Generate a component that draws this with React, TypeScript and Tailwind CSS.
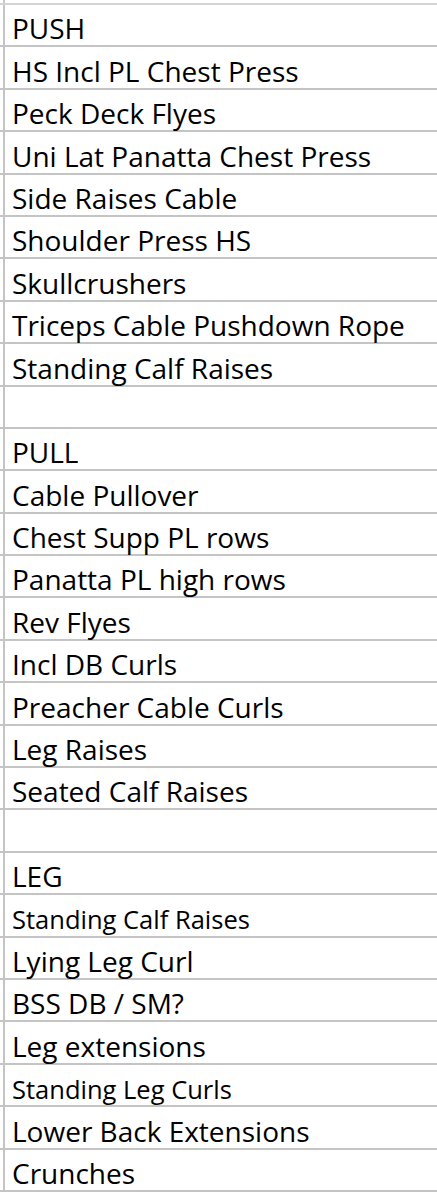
import React from "react";

type Row = { label: string; small?: boolean };

const rows: Row[] = [
    { label: "PUSH" },
    { label: "HS Incl PL Chest Press" },
    { label: "Peck Deck Flyes" },
    { label: "Uni Lat Panatta Chest Press" },
    { label: "Side Raises Cable" },
    { label: "Shoulder Press HS" },
    { label: "Skullcrushers" },
    { label: "Triceps Cable Pushdown Rope" },
    { label: "Standing Calf Raises" },
    { label: "" },
    { label: "PULL" },
    { label: "Cable Pullover" },
    { label: "Chest Supp PL rows" },
    { label: "Panatta PL high rows" },
    { label: "Rev Flyes" },
    { label: "Incl DB Curls" },
    { label: "Preacher Cable Curls" },
    { label: "Leg Raises" },
    { label: "Seated Calf Raises" },
    { label: "" },
    { label: "LEG" },
    { label: "Standing Calf Raises", small: true },
    { label: "Lying Leg Curl" },
    { label: "BSS DB / SM?" },
    { label: "Leg extensions" },
    { label: "Standing Leg Curls", small: true },
    { label: "Lower Back Extensions" },
    { label: "Crunches" },
];

export default function App() {
    return (
        <div className="w-[437px] h-[1200px] bg-white overflow-hidden text-black" style={{ fontFamily: "'Open Sans', 'Noto Sans', sans-serif" }}>
            {/* top edge of the sheet, previous row cut off */}
            <div className="h-[3px] flex">
                <div className="w-[3px]" />
                <div className="flex-1 border-l-2 border-[#c8c8c8]" />
            </div>
            <div className="border-t-2 border-[#d4d4d4]">
                {rows.map((row, idx) => (
                    <div key={idx} className="flex h-[42.4px] border-b-2 border-[#c4c4c4]">
                        <div className="w-[3px] shrink-0" />
                        <div className="flex-1 border-l-2 border-[#c4c4c4] pl-[7px] flex items-end pb-[3px]">
                            <span className={row.small ? "text-[25.5px] leading-none whitespace-nowrap" : "text-[28px] leading-none whitespace-nowrap"}>
                                {row.label}
                            </span>
                        </div>
                    </div>
                ))}
            </div>
        </div>
    );
}
